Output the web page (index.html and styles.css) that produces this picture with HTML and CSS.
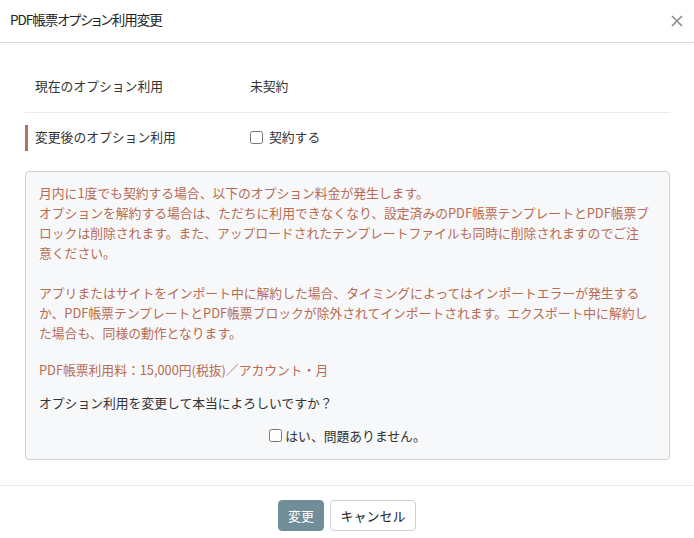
FILE: index.html
```html
<!DOCTYPE html>
<html lang="ja">

<head>
    <meta charset="UTF-8">
    <meta name="viewport" content="width=device-width, initial-scale=1.0">
    <title>PDF帳票オプション利用変更</title>
    <link rel="stylesheet" href="styles.css">
</head>

<body>

    <div class="modal">
        <div class="modal-header">
            <h2 class="modal-title">PDF帳票オプション利用変更</h2>
            <button class="close-btn" type="button" aria-label="閉じる">
                <svg width="12" height="12" viewBox="0 0 12 12">
                    <path d="M1 1 L11 11 M11 1 L1 11" stroke="#8a8a8a" stroke-width="1.6" fill="none" />
                </svg>
            </button>
        </div>

        <div class="modal-body">
            <div class="option-row current">
                <div class="option-label">現在のオプション利用</div>
                <div class="option-value">未契約</div>
            </div>
            <div class="option-row changed">
                <div class="option-label">変更後のオプション利用</div>
                <div class="option-value">
                    <label class="check"><input type="checkbox"> 契約する</label>
                </div>
            </div>

            <div class="notice">
                <p class="warn">月内に1度でも契約する場合、以下のオプション料金が発生します。<br>
                    オプションを解約する場合は、ただちに利用できなくなり、設定済みのPDF帳票テンプレートとPDF帳票ブ<br>ロックは削除されます。また、アップロードされたテンプレートファイルも同時に削除されますのでご注<br>意ください。<br><br>
                    アプリまたはサイトをインポート中に解約した場合、タイミングによってはインポートエラーが発生するか、PDF帳票テンプレートとPDF帳票ブロックが除外されてインポートされます。エクスポート中に解約した場合も、同様の動作となります。</p>
                <p class="warn price">PDF帳票利用料：15,000円(税抜)／アカウント・月</p>
                <p class="confirm">オプション利用を変更して本当によろしいですか？</p>
                <div class="agree">
                    <label class="check"><input type="checkbox">はい、問題ありません。</label>
                </div>
            </div>
        </div>

        <div class="modal-footer">
            <button class="btn btn-primary" type="button">変更</button>
            <button class="btn btn-default" type="button">キャンセル</button>
        </div>
    </div>

</body>

</html>
```

FILE: styles.css
```css
/* Base */
body {
    margin: 0;
    padding: 0;
    background: #fff;
    font-family: "Noto Sans CJK JP", "Noto Sans", sans-serif;
    font-size: 12.8px;
    color: #333;
}

.modal {
    width: 694px;
}

/* Header */
.modal-header {
    display: flex;
    align-items: center;
    justify-content: space-between;
    height: 43px;
    padding: 0 10px;
    border-bottom: 1px solid #d9d9d9;
    box-sizing: border-box;
}

.modal-title {
    margin: 0;
    font-size: 13.5px;
    font-weight: 400;
    font-feature-settings: "palt";
    letter-spacing: -1px;
    color: #222;
    line-height: 1;
    padding-bottom: 3px;
}

.close-btn {
    background: none;
    border: 0;
    padding: 0;
    margin-right: 1px;
    width: 12px;
    height: 12px;
    display: flex;
    cursor: pointer;
}

/* Body */
.modal-body {
    padding: 19px 24px 0 25px;
}

.option-row {
    display: flex;
    line-height: 24px;
}

.option-row.current {
    padding: 12px 0 14px;
    border-bottom: 1px solid #ebebeb;
}

.option-row.changed {
    padding: 12px 0 20px;
}

.option-label {
    width: 215px;
    padding-left: 10px;
}

.option-row.changed .option-label {
    border-left: 3px solid #b5715d;
    padding-left: 7px;
}

.check {
    display: inline-flex;
    align-items: center;
    cursor: pointer;
}

.check input {
    width: 13px;
    height: 13px;
    margin: 0 6px 0 0;
}

/* Notice box */
.notice {
    background: #f7f8fa;
    border: 1px solid #cdd1d6;
    border-radius: 4px;
    padding: 11px 13px 12px 13px;
    line-height: 20px;
}

.notice p {
    margin: 0;
}

.warn {
    color: #b86b52;
}

.price {
    margin-top: 17px !important;
}

.confirm {
    margin-top: 13px !important;
    color: #333;
}

.agree {
    margin-top: 13px;
    text-align: center;
}

.agree .check input {
    margin-right: 3px;
}

/* Footer */
.modal-footer {
    margin-top: 25px;
    border-top: 1px solid #ebebeb;
    padding: 14px 0 0;
    display: flex;
    justify-content: center;
    gap: 6px;
}

.btn {
    font-family: inherit;
    font-size: 13px;
    height: 31px;
    border-radius: 4px;
    cursor: pointer;
}

.btn-primary {
    width: 46px;
    background: #718d99;
    border: 1px solid #718d99;
    color: #fff;
}

.btn-default {
    width: 86px;
    background: #fff;
    border: 1px solid #ccd2d9;
    color: #222;
}
```
